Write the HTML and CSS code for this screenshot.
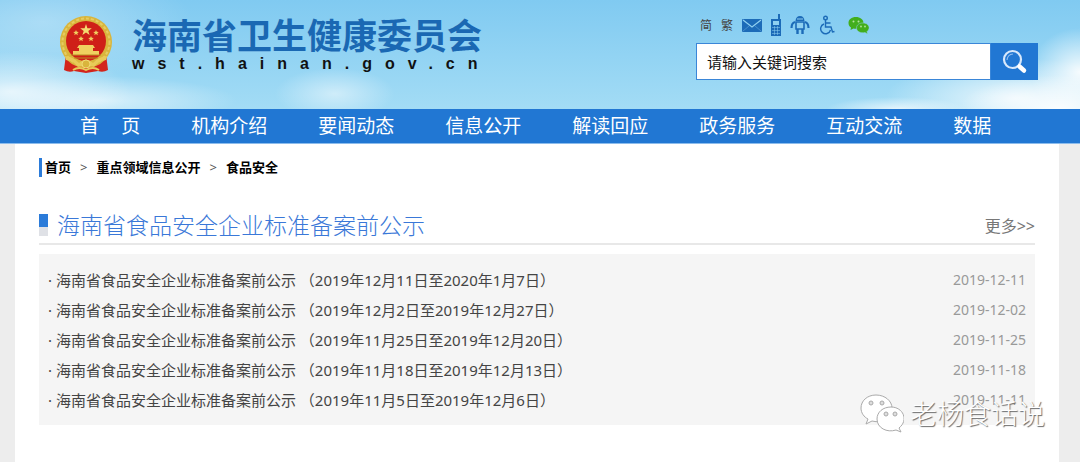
FILE: index.html
```html
<!DOCTYPE html>
<html lang="zh-CN">
<head>
    <meta charset="UTF-8">
    <meta name="viewport" content="width=device-width, initial-scale=1.0">
    <title>海南省卫生健康委员会</title>
    <link rel="stylesheet" href="styles.css">
</head>
<body>

<header class="header">
    <div class="logo">
        <svg class="emblem" viewBox="0 0 54 58" aria-hidden="true">
            <path d="M7 38 L5 54 Q10 57 15 55 L27 57 L39 55 Q44 57 49 54 L47 38 Z" fill="#d3241c"/>
            <circle cx="27" cy="26" r="26" fill="#d9b53c"/>
            <circle cx="27" cy="26" r="23.5" fill="none" stroke="#e6cc62" stroke-width="2" stroke-dasharray="3 2"/>
            <circle cx="27" cy="25" r="20" fill="#cf1f18"/>
            <path d="M27 8 l1.4 4.2 4.4 0 -3.5 2.7 1.3 4.2 -3.6 -2.5 -3.6 2.5 1.3 -4.2 -3.5 -2.7 4.4 0z" fill="#f3dc70"/>
            <g fill="#f0d060">
                <path d="M17 14 l.8 1.8 2 .1 -1.5 1.3 .5 2 -1.8 -1.1 -1.7 1.1 .5 -2 -1.6 -1.3 2 -.1z"/>
                <path d="M37 14 l.8 1.8 2 .1 -1.5 1.3 .5 2 -1.8 -1.1 -1.7 1.1 .5 -2 -1.6 -1.3 2 -.1z"/>
                <path d="M22 20 l.8 1.8 2 .1 -1.5 1.3 .5 2 -1.8 -1.1 -1.7 1.1 .5 -2 -1.6 -1.3 2 -.1z"/>
                <path d="M32 20 l.8 1.8 2 .1 -1.5 1.3 .5 2 -1.8 -1.1 -1.7 1.1 .5 -2 -1.6 -1.3 2 -.1z"/>
                <path d="M20 29 h14 l2 3 h-2 v3 h6 v4 h-26 v-4 h6 v-3 h-2z"/>
            </g>
            <path d="M12 39 H42 M15 42 H39" stroke="#b98e24" stroke-width="1"/>
            <path d="M6 40 Q15 41 20 47 Q27 40 34 47 Q39 41 48 40 L47 44 Q39 45 35 51 Q27 45 19 51 Q15 45 7 44 Z" fill="#e8ca58"/>
            <circle cx="27" cy="48" r="4" fill="#d9b53c" stroke="#f0d973"/>
            <path d="M14 54 Q20 50 27 54 Q34 50 40 54" fill="none" stroke="#e8ca58" stroke-width="2"/>
        </svg>
        <div class="logo-text">
            <div class="site-name">海南省卫生健康委员会</div>
            <div class="site-url">wst.hainan.gov.cn</div>
        </div>
    </div>

    <div class="tools">
        <div class="quick-links">
            <a href="#">简</a>
            <a href="#">繁</a>
            <a href="#" aria-label="邮箱">
                <svg width="20" height="20" viewBox="0 0 20 20"><rect y="4" width="20" height="13" rx="1" fill="#1c6bb8"/><path d="M1 5 L10 12 L19 5" fill="none" stroke="#8fd0f0" stroke-width="1.2"/><path d="M1 16 L7 11 M19 16 L13 11" stroke="#5fa4d8" stroke-width=".6"/></svg>
            </a>
            <a href="#" aria-label="手机">
                <svg width="10" height="22" viewBox="0 0 10 22"><path d="M7 0 h2 v5 h1 v17 H0 V5 h7z" fill="#1c6bb8"/><path d="M2 7 h6 v4 H2z" fill="#8fd0f0"/><path d="M1 13.5 H9 M1 16.5 H9 M1 19.5 H9 M3.5 12 V21 M6.5 12 V21" stroke="#8fd0f0" stroke-width=".5"/></svg>
            </a>
            <a href="#" aria-label="智能问答">
                <svg width="20" height="20" viewBox="0 0 20 20"><path d="M5.500 6 Q6 1 10 1 Q14 1 14.500 6z" fill="#1c6bb8"/><path d="M7 4 h6" stroke="#8fd0f0"/><path d="M6 7 h8 v7 h-8z" fill="#8fd0f0" stroke="#1c6bb8" stroke-width="1.6"/><path d="M5 7 Q1.5 8 1.5 13 M15 7 Q18.5 8 18.5 13" fill="none" stroke="#1c6bb8" stroke-width="2.2"/><path d="M7.5 14 V19 M12.5 14 V19" stroke="#1c6bb8" stroke-width="2.4"/></svg>
            </a>
            <a href="#" aria-label="无障碍">
                <svg width="16" height="20" viewBox="0 0 16 20" fill="none" stroke="#1c6bb8" stroke-width="1.4"><circle cx="6.500" cy="3" r="1.8"/><path d="M6.5 5 V12 H12 L13.5 17 L15.5 16.5 M7 8 H11.5 M5 9 A5 5 0 1 0 11.5 15"/></svg>
            </a>
            <a href="#" aria-label="微信" class="wechat">
                <svg width="22" height="20" viewBox="0 0 22 20"><path d="M8 2 C3.5 2 .5 4.5 .5 8 C.5 10 1.5 11.5 3 12.5 L2.5 15 L5.5 13.5 C10 14.5 15.5 12 15.5 8 C15.5 4.5 12 2 8 2z" fill="#42ae1c"/><path d="M15 8 C11 8 8.5 10 8.5 13 C8.5 16.5 13 18.500 17 17.5 L19.5 19 L19 16.5 C23 13.5 21 8 15 8z" fill="#42ae1c" stroke="#8fd0f0" stroke-width=".5"/><g fill="#b5e3a0"><circle cx="5.5" cy="6.5" r="1"/><circle cx="10.5" cy="6.5" r="1"/><circle cx="13" cy="11.5" r=".9"/><circle cx="17" cy="11.5" r=".9"/></g></svg>
            </a>
        </div>
        <form class="search">
            <input type="text" value="请输入关键词搜索" aria-label="请输入关键词搜索">
            <button type="button" aria-label="搜索">
                <svg width="26" height="26" viewBox="0 0 26 26"><circle cx="10.5" cy="10.5" r="8.5" fill="none" stroke="#d7e8fb" stroke-width="2.2"/><path d="M5 11 Q5.5 5.5 11 5" fill="none" stroke="#8fbdf0" stroke-width="1.2"/><path d="M17.5 17.5 L22 21.5" stroke="#fff" stroke-width="4.5" stroke-linecap="round"/></svg>
            </button>
        </form>
    </div>
</header>

<nav class="nav">
    <a href="#">首&emsp;&thinsp;页</a>
    <a href="#">机构介绍</a>
    <a href="#">要闻动态</a>
    <a href="#">信息公开</a>
    <a href="#">解读回应</a>
    <a href="#">政务服务</a>
    <a href="#">互动交流</a>
    <a href="#">数据</a>
</nav>

<main class="container">
    <div class="breadcrumb">
        <a href="#">首页</a>
        <span>&gt;</span>
        <a href="#">重点领域信息公开</a>
        <span>&gt;</span>
        <a href="#">食品安全</a>
    </div>

    <div class="section-title">
        <h1>海南省食品安全企业标准备案前公示</h1>
        <a href="#" class="more">更多&gt;&gt;</a>
    </div>

    <ul class="news-list">
        <li><a href="#">海南省食品安全企业标准备案前公示 （2019年12月11日至2020年1月7日）</a><span class="date">2019-12-11</span></li>
        <li><a href="#">海南省食品安全企业标准备案前公示 （2019年12月2日至2019年12月27日）</a><span class="date">2019-12-02</span></li>
        <li><a href="#">海南省食品安全企业标准备案前公示 （2019年11月25日至2019年12月20日）</a><span class="date">2019-11-25</span></li>
        <li><a href="#">海南省食品安全企业标准备案前公示 （2019年11月18日至2019年12月13日）</a><span class="date">2019-11-18</span></li>
        <li><a href="#">海南省食品安全企业标准备案前公示 （2019年11月5日至2019年12月6日）</a><span class="date">2019-11-11</span></li>
    </ul>
</main>

<div class="watermark">
    <svg width="44" height="40" viewBox="0 0 44 40" fill="#fff" stroke="#aaa" stroke-width="1">
        <path d="M16 1 C7 1 1 7 1 14 C1 19 4 23 8 25 L6 30 L12 27 C23 30 32 23 32 14 C32 7 25 1 16 1z"/>
        <path d="M31 13 C23 13 17 18 17 25 C17 34 27 39 36 36 L41 38 L39 34 C49 26 43 13 31 13z"/>
        <g fill="#ddd"><circle cx="11" cy="9" r="2"/><circle cx="22" cy="9" r="2"/><circle cx="26" cy="20" r="2"/><circle cx="35" cy="20" r="2"/></g>
    </svg>
    <span>老杨食话说</span>
</div>

</body>
</html>
```
FILE: styles.css
```css
* {
    box-sizing: border-box;
}
body {
    margin: 0;
    min-height: 100vh;
    display: flex;
    flex-direction: column;
    position: relative;
    font-family: "Noto Sans", "Noto Sans CJK SC", sans-serif;
    font-size: 15px;
    color: #444;
    background-color: #ededed;
}
a {
    color: inherit;
    text-decoration: none;
}

/* Header with sky background */
.header {
    display: flex;
    justify-content: space-between;
    align-items: flex-start;
    padding: 14px 42px 0 59px;
    height: 109px;
    background:
        radial-gradient(ellipse 100px 34px at 98% 100%, rgba(255,255,255,0.9), rgba(255,255,255,0)),
        radial-gradient(ellipse 50px 44px at 100% 66%, rgba(255,255,255,0.9), rgba(255,255,255,0)),
        radial-gradient(ellipse 130px 40px at 94% 90%, rgba(255,255,255,0.8), rgba(255,255,255,0)),
        radial-gradient(ellipse 70px 12px at 83% 100%, rgba(255,255,255,0.7), rgba(255,255,255,0)),
        radial-gradient(ellipse 120px 40px at 1% 84%, rgba(255,255,255,0.7), rgba(255,255,255,0)),
        radial-gradient(ellipse 140px 24px at 9% 92%, rgba(255,255,255,0.6), rgba(255,255,255,0)),
        radial-gradient(ellipse 60px 26px at 31% 86%, rgba(255,255,255,0.5), rgba(255,255,255,0)),
        radial-gradient(ellipse 150px 60px at 4% 20%, rgba(255,255,255,0.3), rgba(255,255,255,0)),
        linear-gradient(#80caf1, #a3dcf5);
}
.logo {
    display: flex;
    align-items: flex-start;
    gap: 19px;
}
.emblem {
    width: 54px;
    height: 58px;
    margin-top: 2px;
}
.site-name {
    font-family: "Noto Sans CJK SC", sans-serif;
    font-size: 35px;
    line-height: 40px;
    font-weight: bold;
    color: #1a68b3;
}
.site-url {
    font-family: "Liberation Sans", Arial, sans-serif;
    font-size: 16px;
    line-height: 20px;
    font-weight: bold;
    letter-spacing: 13px;
    color: #111;
}

/* Icons and search box */
.tools {
    width: 342px;
}
.quick-links {
    display: flex;
    align-items: center;
    gap: 9px;
    height: 22px;
    padding-left: 4px;
    margin-bottom: 7px;
    font-size: 12px;
    color: #444;
}
.quick-links svg {
    display: block;
}
.wechat {
    margin-left: 4px;
}
.search {
    display: flex;
    height: 37px;
}
.search input {
    flex: 1;
    min-width: 0;
    padding: 0 10px;
    border: 1px solid #3a86d8;
    border-radius: 0;
    font-family: inherit;
    font-size: 15px;
    color: #111;
    background-color: #fff;
}
.search button {
    width: 47px;
    padding: 0;
    border: none;
    display: flex;
    align-items: center;
    justify-content: center;
    background-color: #2177d3;
}

/* Navigation */
.nav {
    display: flex;
    gap: 51px;
    padding: 0 80px;
    font-size: 19px;
    line-height: 34px;
    white-space: nowrap;
    color: #fff;
    background-color: #2177d3;
    border-bottom: 1px solid #8cbcec;
}

/* Content */
.container {
    flex: 1;
    margin: 0 21px 0 15px;
    padding: 14px 24px;
    background-color: #fff;
}
.breadcrumb {
    display: flex;
    align-items: center;
    gap: 9px;
    padding-left: 3px;
    border-left: 3px solid #2b7bd9;
    font-size: 13px;
    line-height: 19px;
    font-weight: bold;
    color: #000;
}
.breadcrumb span {
    font-weight: normal;
    color: #555;
}
.section-title {
    display: flex;
    justify-content: space-between;
    align-items: center;
    margin-top: 30px;
    border-bottom: 2px solid #e8e8e8;
}
.section-title h1 {
    display: flex;
    align-items: center;
    gap: 9px;
    margin: 0;
    font-size: 23px;
    line-height: 36px;
    font-weight: 300;
    color: #3a78d8;
}
.section-title h1::before {
    content: "";
    width: 9px;
    height: 22px;
    background: linear-gradient(#2b7bd9 60%, #dfe1e6 60%);
}
.more {
    font-size: 16px;
    color: #777;
}
.news-list {
    list-style: none;
    margin: 9px 0 0;
    padding: 11px 9px 10px;
    background-color: #f5f5f5;
}
.news-list li {
    display: flex;
    justify-content: space-between;
    line-height: 30px;
}
.news-list a::before {
    content: "· ";
}
.date {
    font-size: 14px;
    color: #999;
}

/* Account mark over the bottom corner */
.watermark {
    position: absolute;
    right: 35px;
    bottom: 28px;
    display: flex;
    align-items: center;
    gap: 6px;
    font-size: 27px;
    font-weight: 300;
    line-height: 40px;
    color: #fff;
    text-shadow: 1px 1px 1px #666;
}
```
